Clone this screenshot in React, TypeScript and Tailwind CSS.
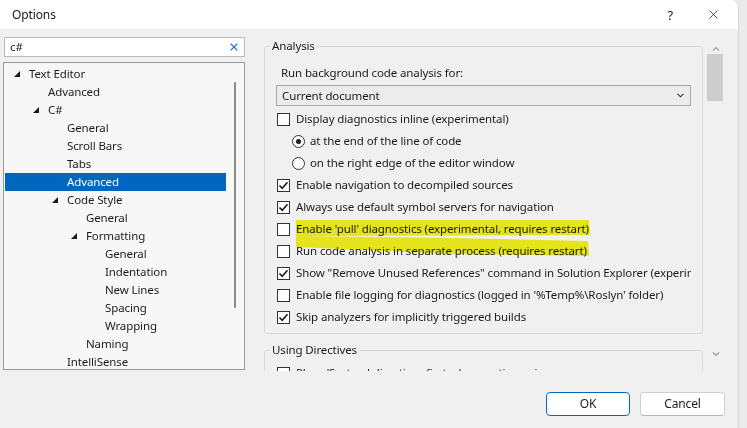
import { X } from "lucide-react";

type Node = { t: string; l: number; e?: boolean; sel?: boolean };

const tree: Node[] = [
  { t: "Text Editor", l: 0, e: true },
  { t: "Advanced", l: 1 },
  { t: "C#", l: 1, e: true },
  { t: "General", l: 2 },
  { t: "Scroll Bars", l: 2 },
  { t: "Tabs", l: 2 },
  { t: "Advanced", l: 2, sel: true },
  { t: "Code Style", l: 2, e: true },
  { t: "General", l: 3 },
  { t: "Formatting", l: 3, e: true },
  { t: "General", l: 4 },
  { t: "Indentation", l: 4 },
  { t: "New Lines", l: 4 },
  { t: "Spacing", l: 4 },
  { t: "Wrapping", l: 4 },
  { t: "Naming", l: 3 },
  { t: "IntelliSense", l: 2 },
];

const indent = ["pl-[9px]", "pl-[28px]", "pl-[47px]", "pl-[66px]", "pl-[85px]"];

function Checkbox({ checked }: { checked?: boolean }) {
  return (
    <span className="w-[13px] h-[13px] shrink-0 border border-[#333] bg-white flex items-center justify-center">
      {checked && (
        <svg width="11" height="11" viewBox="0 0 11 11">
          <path d="M1.5 5.5 L4.2 8.3 L9.5 2.2" fill="none" stroke="#1a1a1a" strokeWidth="1.6" />
        </svg>
      )}
    </span>
  );
}

function Radio({ on }: { on?: boolean }) {
  return (
    <span className="w-[13px] h-[13px] shrink-0 rounded-full border border-[#333] bg-white flex items-center justify-center">
      {on && <span className="w-[5px] h-[5px] rounded-full bg-[#1a1a1a]" />}
    </span>
  );
}

function CheckRow({ checked, label }: { checked?: boolean; label: string }) {
  return (
    <div className="h-[22px] flex items-center pl-[1px] gap-[6px] overflow-hidden whitespace-nowrap">
      <Checkbox checked={checked} />
      <span>{label}</span>
    </div>
  );
}

function RadioRow({ on, label }: { on?: boolean; label: string }) {
  return (
    <div className="h-[22px] flex items-center pl-[16px] gap-[5px] overflow-hidden whitespace-nowrap">
      <Radio on={on} />
      <span>{label}</span>
    </div>
  );
}

function Chevron({ up }: { up?: boolean }) {
  return (
    <svg width="8" height="5" viewBox="0 0 8 5">
      <path
        d={up ? "M1 4.5 L4 1.5 L7 4.5" : "M1 0.5 L4 3.5 L7 0.5"}
        fill="none"
        stroke="#9a9a9a"
        strokeWidth="1.1"
      />
    </svg>
  );
}

export default function App() {
  return (
    <div className="relative w-[747px] h-[428px] flex bg-[#ebebeb] text-[11.5px] tracking-[-0.12px] leading-[16px] text-[#1b1b1b] font-['Noto_Sans',sans-serif] overflow-hidden">
      <div className="w-[739px] h-full flex flex-col bg-[#f0f0f0] rounded-tr-[8px] border-r border-[#d6d6d6]">
        {/* Title bar */}
        <div className="h-[29px] shrink-0 bg-white rounded-tr-[8px] flex items-center pl-[12px]">
          <span className="text-[12px]">Options</span>
          <span className="flex-1" />
          <span className="text-[13px]">?</span>
          <X size={15} strokeWidth={1.2} className="ml-[33px] mr-[17px] text-[#222]" />
        </div>

        {/* Body */}
        <div className="flex-1 flex flex-col">
          <div className="flex pt-[8px]">
            {/* Left column */}
            <div className="w-[242px] ml-[3px] flex flex-col">
              <div className="h-[20px] ml-[1px] bg-white border border-[#b9b9b9] flex items-center pl-[5px] pr-[4px]">
                <span className="flex-1">c#</span>
                <X size={12} strokeWidth={2.2} className="text-[#2a6fb8]" />
              </div>
              <div className="relative mt-[5px] h-[308px] bg-[#f7f7f7] border border-[#9a9a9a] pt-[2px] overflow-hidden">
                {tree.map((n, i) => (
                  <div
                    key={i}
                    className={`h-[18px] w-[221px] ml-[1px] flex items-center whitespace-nowrap ${indent[n.l]} ${
                      n.sel ? "bg-[#0067c0] text-white" : ""
                    }`}
                  >
                    <span className="w-[15px] flex items-center">
                      {n.e && (
                        <svg width="6" height="6" viewBox="0 0 6 6">
                          <polygon points="6,0 6,6 0,6" fill="#1a1a1a" />
                        </svg>
                      )}
                    </span>
                    <span>{n.t}</span>
                  </div>
                ))}
                <div className="absolute left-[230px] top-[19px] w-[2px] h-[226px] bg-[#8a8a8a] rounded-full" />
              </div>
            </div>

            {/* Right column */}
            <div className="ml-[15px] flex">
              <div className="w-[444px] h-[334px] overflow-hidden">
                <fieldset className="min-w-0 ml-[4px] mt-[1px] w-[439px] border border-[#d9d9d9] rounded-[3px] pl-[11px] pr-[11px] pb-[5px]">
                  <legend className="ml-[-6px] px-[2px]">Analysis</legend>
                  <div className="mt-[10px] h-[18px] flex items-center pl-[5px]">Run background code analysis for:</div>
                  <div className="mt-[3px] h-[21px] border border-[#a9a9a9] bg-[#ececec] flex items-center pl-[5px] pr-[6px]">
                    <span className="flex-1">Current document</span>
                    <svg width="7" height="5" viewBox="0 0 7 5">
                      <path d="M0.5 0.8 L3.5 3.8 L6.5 0.8" fill="none" stroke="#333" strokeWidth="1.1" />
                    </svg>
                  </div>
                  <div className="mt-[2px]">
                    <CheckRow label="Display diagnostics inline (experimental)" />
                    <RadioRow on label="at the end of the line of code" />
                    <RadioRow label="on the right edge of the editor window" />
                    <CheckRow checked label="Enable navigation to decompiled sources" />
                    <CheckRow checked label="Always use default symbol servers for navigation" />
                    <CheckRow label="Enable 'pull' diagnostics (experimental, requires restart)" />
                    <CheckRow label="Run code analysis in separate process (requires restart)" />
                    <CheckRow checked label={'Show "Remove Unused References" command in Solution Explorer (experimental)'} />
                    <CheckRow label="Enable file logging for diagnostics (logged in '%Temp%\Roslyn' folder)" />
                    <CheckRow checked label="Skip analyzers for implicitly triggered builds" />
                  </div>
                </fieldset>
                <fieldset className="min-w-0 ml-[4px] mt-[8px] w-[439px] border border-[#d9d9d9] rounded-[3px] pl-[11px] pr-[11px] pb-[5px]">
                  <legend className="ml-[-6px] px-[2px]">Using Directives</legend>
                  <div className="mt-[4px]">
                    <CheckRow label="Place 'System' directives first when sorting usings" />
                  </div>
                </fieldset>
              </div>
              {/* Scrollbar */}
              <div className="w-[20px] h-[334px] flex flex-col items-center pl-[2px]">
                <div className="h-[14px] flex items-end justify-center pl-[2px]">
                  <Chevron up />
                </div>
                <div className="mt-[3px] w-[16px] h-[47px] bg-[#cdcdcd]" />
                <div className="flex-1" />
                <div className="h-[14px] mb-[5px] flex items-start justify-center pl-[2px]">
                  <Chevron />
                </div>
              </div>
            </div>
          </div>

          {/* Buttons */}
          <div className="mt-[21px] flex justify-end gap-[10px] pr-[13px]">
            <button className="w-[84px] h-[24px] bg-white border border-[#0067c0] rounded-[4px] text-[12px]">OK</button>
            <button className="w-[85px] h-[24px] bg-white border border-[#d0d0d0] border-b-[#b5b5b5] rounded-[4px] text-[12px]">
              Cancel
            </button>
          </div>
        </div>
      </div>

      {/* Marker highlight annotation */}
      <svg className="absolute left-0 top-0 pointer-events-none mix-blend-multiply" width="747" height="428">
        <path
          d="M297 221 L588 221 L589 234 L297 235 Z"
          fill="#f4f21c"
          stroke="#f4f21c"
          strokeWidth="2"
          strokeLinejoin="round"
        />
        <path
          d="M297 237 L450 239 L587 242 L588 255 L450 253 L297 246 Z"
          fill="#f4f21c"
          stroke="#f4f21c"
          strokeWidth="2"
          strokeLinejoin="round"
        />
      </svg>
    </div>
  );
}
